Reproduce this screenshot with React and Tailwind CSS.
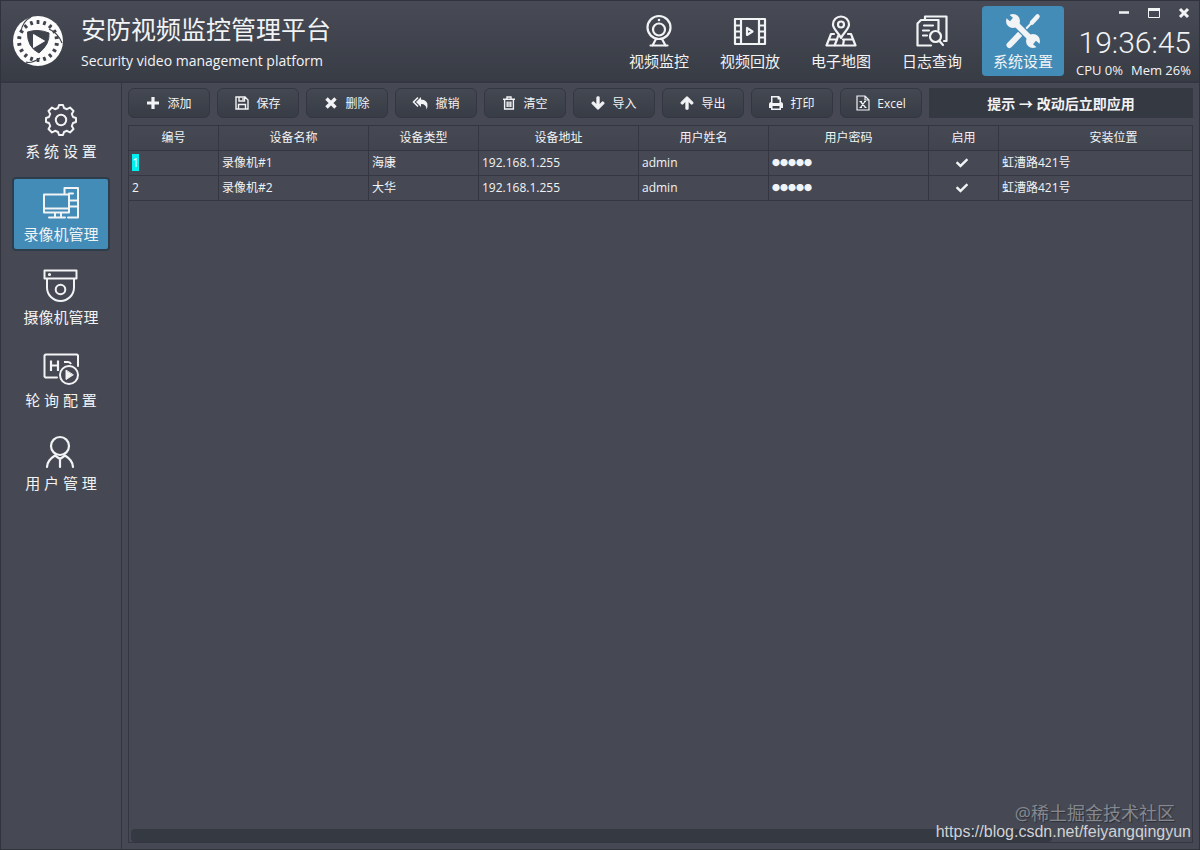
import React from 'react';
import { FaArrowDown, FaArrowUp, FaCheck } from 'react-icons/fa';

const line = { fill: 'none', stroke: 'currentColor', strokeLinecap: 'round', strokeLinejoin: 'round' };

function Logo() {
  const holes = Array.from({ length: 18 }, (_, i) => i * 20);
  return (
    <svg viewBox="0 0 50 50" className="w-[50px] h-[50px]" aria-hidden="true">
      <circle cx="25" cy="25" r="25" fill="#fcfcfd" />
      {holes.map((a) => (
        <rect key={a} x="23.600" y="4" width="2.800" height="4" rx="0.500" fill="#3f434c" transform={`rotate(${a} 25 25)`} />
      ))}
      <path d="M14.500 16Q25 12.500 36 17Q37 28 26 37Q14 31 14.500 16Z" fill="#3f434c" stroke="#3f434c" strokeLinejoin="round" />
      <path d="M8 15Q10 5 18 1M49 27Q45 17 36 13M13 46Q18 48 27 42" fill="none" stroke="#3f434c" strokeWidth="1.200" />
      <path d="M20.500 18.500L31.500 25L20.500 31.500Z" fill="#fcfcfd" stroke="#fcfcfd" strokeLinejoin="round" />
    </svg>
  );
}

function WebcamIcon() {
  return (
    <svg viewBox="0 0 34 34" className="w-[34px] h-[34px]" {...line} strokeWidth="2.200">
      <circle cx="17" cy="13.500" r="11.500" />
      <circle cx="17" cy="15.500" r="6" />
      <circle cx="17" cy="6" r="0.700" fill="currentColor" strokeWidth="1.200" />
      <path d="M14 25L10.500 31.500M20 25L23.500 31.500M8.500 31.500H25.500" />
    </svg>
  );
}

function FilmIcon() {
  return (
    <svg viewBox="0 0 34 34" className="w-[34px] h-[34px]" {...line} strokeWidth="2.200">
      <path d="M2 5H32V30H2ZM8 5V30M26 5V30M2 11.500H8M2 17.500H8M2 23.500H8M26 11.500H32M26 17.500H32M26 23.500H32" />
      <path d="M14 14V21L19.500 17.500Z" />
    </svg>
  );
}

function MapIcon() {
  return (
    <svg viewBox="0 0 34 34" className="w-[34px] h-[34px]" {...line} strokeWidth="2.200">
      <path d="M17 24C14 18 9 15 9 10.500A8 8 0 0 1 25 10.500C25 15 20 18 17 24Z" />
      <circle cx="17" cy="10.500" r="3" />
      <path d="M10 20H7L2.500 31.500H31.500L27 20H24M5.500 25.500H13L10.500 31.500M13 25.500L14 22M20 25.500L19 31.500M19 25.500H29" />
    </svg>
  );
}

function LogIcon() {
  return (
    <svg viewBox="0 0 34 34" className="w-[34px] h-[34px]" {...line} strokeWidth="2.200">
      <path d="M16 31.500H2.500V9.500L6 6H23.500V16M10 6V2.500H31.500V27H29" />
      <path d="M9 11.500H18M8 16.500H14M8 21.500H12" />
      <circle cx="20.500" cy="22.500" r="5.500" />
      <path d="M24.500 27L28 31" />
    </svg>
  );
}

function ToolsIcon() {
  return (
    <svg viewBox="0 0 36 36" className="w-9 h-9" fill="none" stroke="currentColor">
      <path d="M32.500 3.500L27 9.500" strokeWidth="4.500" strokeLinecap="round" />
      <path d="M27 9.500L19 18" strokeWidth="2" />
      <path d="M15 21L4.500 32" strokeWidth="6" strokeLinecap="round" />
      <path d="M9 9L27 27" strokeWidth="8" stroke="#438cb8" />
      <path d="M9 9L27 27" strokeWidth="5.500" />
      <circle cx="8" cy="8" r="7" fill="currentColor" stroke="none" />
      <circle cx="28" cy="28" r="7" fill="currentColor" stroke="none" />
      <path d="M0 1L6.500 6.500M36 35L29.500 29.500" strokeWidth="4.500" stroke="#438cb8" />
    </svg>
  );
}

function GearIcon() {
  return (
    <svg viewBox="0 0 36 36" className="w-9 h-9" {...line} strokeWidth="2">
      <path d="M15 6L16 3H20L21 6L24 7.200L27 5.500L30.500 9L28.800 12L30 15L33 16V20L30 21L28.800 24L30.500 27L27 30.500L24 28.800L21 30L20 33H16L15 30L12 28.800L9 30.500L5.500 27L7.200 24L6 21L3 20V16L6 15L7.200 12L5.500 9L9 5.500L12 7.200Z" />
      <circle cx="18" cy="18" r="5.200" />
    </svg>
  );
}

function RecorderIcon() {
  return (
    <svg viewBox="0 0 36 36" className="w-9 h-9" {...line} strokeWidth="2">
      <path d="M1 9.500H26V27.500H1ZM1 23.500H26M12 27.500V32M18 27.500V32M6 32.500H22" />
      <path d="M21.500 9V3H35V32.500H25M26 8.500H30M26 15.500H34M26 21.500H34" />
    </svg>
  );
}

function DomeIcon() {
  return (
    <svg viewBox="0 0 36 36" className="w-9 h-9" {...line} strokeWidth="2">
      <path d="M1.500 2.500H33.500V10.500H1.500ZM4 11V19.500A13.500 13.500 0 0 0 31 19.500V11" />
      <circle cx="17.500" cy="21.500" r="4.800" />
      <circle cx="6.500" cy="6.500" r="0.600" fill="currentColor" />
    </svg>
  );
}

function PollIcon() {
  return (
    <svg viewBox="0 0 36 36" className="w-9 h-9" {...line} strokeWidth="2">
      <path d="M14 26.500H2.500L1.500 25.500V4.500L2.500 3.500H34L35 4.500V15" />
      <path d="M8 9.500V20M15 9.500V20M8 14.500H15M21 11H25Q27 11 28 13" strokeLinecap="butt" strokeWidth="2.200" />
      <circle cx="26" cy="24" r="9" />
      <path d="M23 19.500V28.500L30 24Z" fill="currentColor" strokeWidth="1" />
    </svg>
  );
}

function UserIcon() {
  return (
    <svg viewBox="0 0 36 36" className="w-9 h-9" {...line} strokeWidth="2.200">
      <circle cx="17" cy="12" r="9" />
      <path d="M4 33C4 27 8 24 12 21.500M30 33C30 27 26 24 22 21.500M12 21.500L17 25L22 21.500M17 25V33" />
    </svg>
  );
}

function FloppyIcon() {
  return (
    <svg viewBox="0 0 14 14" className="w-3.5 h-3.5" fill="none" stroke="currentColor" strokeWidth="1.400">
      <path d="M1 1H10L13 4V13H1ZM4 1V5H9.500V1M3.500 13V8.500H10.500V13" />
      <path d="M8 2V4" />
    </svg>
  );
}

function TrashIcon() {
  return (
    <svg viewBox="0 0 14 14" className="w-3.5 h-3.5" fill="none" stroke="currentColor" strokeWidth="1.400">
      <path d="M1 3.300H13M5 3V1H9V3M2.600 3.500V13H11.400V3.500M5.200 5.500V11M7 5.500V11M8.800 5.500V11" />
    </svg>
  );
}

function CrossIcon() {
  return (
    <svg viewBox="0 0 14 14" className="w-3.5 h-3.5">
      <path d="M2.500 2.500L11.500 11.500M11.500 2.500L2.500 11.500" stroke="currentColor" strokeWidth="3.400" />
    </svg>
  );
}

function PlusIcon() {
  return (
    <svg viewBox="0 0 14 14" className="w-3.5 h-3.5">
      <path d="M7 1V13M1 7H13" stroke="currentColor" strokeWidth="3.200" />
    </svg>
  );
}

function UndoIcon() {
  return (
    <svg viewBox="0 0 16 14" className="w-4 h-3.5" fill="currentColor">
      <path d="M4 6L9 1V3.500Q16 4 15.500 10Q15.300 12 14.500 13.500Q14.500 8 9 8V11Z" />
      <path d="M6 1.500L1.500 6L6 10.500" fill="none" stroke="currentColor" strokeWidth="1.600" />
    </svg>
  );
}

function PrintIcon() {
  return (
    <svg viewBox="0 0 14 14" className="w-3.5 h-3.5" fill="currentColor">
      <path fillRule="evenodd" d="M2 0H10L12 2V6Q14 6.500 14 8V12H12V14H2V12H0V8Q0 6.500 2 6ZM3.500 1.500V7H10.500V3.500H8.500V1.500ZM3.500 10V12.500H10.500V10Z" />
    </svg>
  );
}

function ExcelIcon() {
  return (
    <svg viewBox="0 0 14 16" className="w-3.5 h-4" fill="none" stroke="currentColor" strokeWidth="1.200">
      <path d="M1 1H9L13 5V15H1ZM9 1V5H13" />
      <path d="M4.500 6.500L9.500 12.500M9 6.500L4.500 12.500M3.500 6.500H6M8 6.500H10M3.500 12.500H6M8.500 12.500H10.500" />
    </svg>
  );
}

const navItems = [
  { label: '视频监控', icon: <WebcamIcon /> },
  { label: '视频回放', icon: <FilmIcon /> },
  { label: '电子地图', icon: <MapIcon /> },
  { label: '日志查询', icon: <LogIcon /> },
  { label: '系统设置', icon: <ToolsIcon />, active: true },
];

const sideItems = [
  { label: '系 统 设 置', icon: <GearIcon /> },
  { label: '录像机管理', icon: <RecorderIcon />, active: true },
  { label: '摄像机管理', icon: <DomeIcon /> },
  { label: '轮 询 配 置', icon: <PollIcon /> },
  { label: '用 户 管 理', icon: <UserIcon /> },
];

const actions = [
  { label: '添加', icon: <PlusIcon /> },
  { label: '保存', icon: <FloppyIcon /> },
  { label: '删除', icon: <CrossIcon /> },
  { label: '撤销', icon: <UndoIcon /> },
  { label: '清空', icon: <TrashIcon /> },
  { label: '导入', icon: <FaArrowDown className="w-3.5 h-3.5 stroke-current stroke-[40]" /> },
  { label: '导出', icon: <FaArrowUp className="w-3.5 h-3.5 stroke-current stroke-[40]" /> },
  { label: '打印', icon: <PrintIcon /> },
  { label: 'Excel', icon: <ExcelIcon /> },
];

const columns = [
  { label: '编号', width: 'w-[90px]' },
  { label: '设备名称', width: 'w-[150px]' },
  { label: '设备类型', width: 'w-[110px]' },
  { label: '设备地址', width: 'w-[160px]' },
  { label: '用户姓名', width: 'w-[130px]' },
  { label: '用户密码', width: 'w-[160px]' },
  { label: '启用', width: 'w-[70px]' },
  { label: '安装位置', width: 'w-[230px]' },
];

const devices = [
  { id: 1, name: '录像机#1', type: '海康', ip: '192.168.1.255', user: 'admin', place: '虹漕路421号', editing: true },
  { id: 2, name: '录像机#2', type: '大华', ip: '192.168.1.255', user: 'admin', place: '虹漕路421号' },
];

function Header() {
  return (
    <header className="flex h-[82px] shrink-0 border-b-2 border-[#343741] bg-linear-to-b from-[#484b55] to-[#383c45]">
      <div className="flex flex-1 items-center pl-3 gap-[18px]">
        <Logo />
        <div className="pt-0.5">
          <h1 className="text-[25px] leading-9">安防视频监控管理平台</h1>
          <p className="mt-0.5 text-[14px] leading-6">Security video management platform</p>
        </div>
      </div>
      <nav className="flex gap-[9px] pt-[5px]">
        {navItems.map((item) => (
          <button
            key={item.label}
            className={`flex flex-col items-center w-[82px] h-[70px] rounded pt-1.5 ${item.active ? 'bg-[#438cb8]' : ''}`}
          >
            <span className="flex items-center justify-center h-[38px]">{item.icon}</span>
            <span className="text-[15px] leading-[22px]">{item.label}</span>
          </button>
        ))}
      </nav>
      <div className="flex flex-col w-[135px] pl-3 pr-2">
        <div className="flex justify-end gap-4 h-6 items-center">
          <button aria-label="最小化" className="w-3.5 h-3.5">
            <svg viewBox="0 0 14 14" className="w-3.5 h-3.5"><path d="M2 6.500H12" stroke="currentColor" strokeWidth="2.500" /></svg>
          </button>
          <button aria-label="最大化" className="w-3.5 h-3.5">
            <svg viewBox="0 0 14 14" className="w-3.5 h-3.5" fill="none" stroke="currentColor">
              <path d="M1.500 3V11.500H12.500V3" />
              <path d="M1 3.500H13" strokeWidth="3" />
            </svg>
          </button>
          <button aria-label="关闭" className="w-3.5 h-3.5">
            <svg viewBox="0 0 14 14" className="w-3.5 h-3.5"><path d="M3 3L11 11M11 3L3 11" stroke="currentColor" strokeWidth="3" /></svg>
          </button>
        </div>
        <time className="text-right text-[30px] leading-9 font-light whitespace-nowrap font-['Roboto']">19:36:45</time>
        <p className="flex justify-between text-[13px] leading-[18px] whitespace-nowrap">
          <span>CPU 0%</span>
          <span>Mem 26%</span>
        </p>
      </div>
    </header>
  );
}

function Sidebar() {
  return (
    <aside className="flex flex-col items-center w-[121px] shrink-0 gap-[9px] pt-[11px] border-r border-[#343741]">
      {sideItems.map((item) => (
        <button
          key={item.label}
          className={`flex flex-col items-center w-[98px] h-[74px] rounded border-2 pt-1.5 ${item.active ? 'bg-[#438cb8] border-[#2d3d4b]' : 'border-transparent'}`}
        >
          {item.icon}
          <span className="text-[15px] leading-[26px]">{item.label}</span>
        </button>
      ))}
    </aside>
  );
}

function Toolbar() {
  return (
    <div className="flex gap-[7px]">
      {actions.map((action) => (
        <button
          key={action.label}
          className="flex items-center justify-center gap-[7px] w-[82px] h-[30px] shrink-0 rounded-md border border-[#343741] bg-linear-to-b from-[#444852] to-[#383c45] text-[12px]"
        >
          {action.icon}
          <span className="pt-px">{action.label}</span>
        </button>
      ))}
      <div className="flex flex-1 items-center justify-center h-[30px] bg-[#353942] text-[14px] font-bold whitespace-nowrap">
        提示 → 改动后立即应用
      </div>
    </div>
  );
}

function DeviceTable() {
  return (
    <div className="flex flex-1 flex-col justify-between mt-[7px] border border-[#343741] overflow-hidden">
      <table className="table-fixed w-[1100px] border-separate border-spacing-0 text-[12px] leading-6">
        <thead>
          <tr className="bg-linear-to-b from-[#464953] to-[#40444d]">
            {columns.map((col) => (
              <th key={col.label} className={`p-0 font-normal border-r border-b border-[#343741] ${col.width}`}>
                {col.label}
              </th>
            ))}
          </tr>
        </thead>
        <tbody>
          {devices.map((d) => (
            <tr key={d.id} className="[&>td]:h-[25px] [&>td]:border-r [&>td]:border-b [&>td]:border-[#343741] [&>td]:px-[3px] [&>td]:py-0">
              <td>
                <span className={d.editing ? 'inline-block leading-[17px] bg-[#00f0f0]' : ''}>{d.id}</span>
              </td>
              <td>{d.name}</td>
              <td>{d.type}</td>
              <td>{d.ip}</td>
              <td>{d.user}</td>
              <td className="text-[8px]">●●●●●</td>
              <td>
                <label className="relative flex items-center justify-center h-6 pr-1">
                  <input type="checkbox" defaultChecked aria-label={`启用 ${d.name}`} className="peer appearance-none w-3.5 h-3.5" />
                  <FaCheck className="absolute w-3 h-3 hidden peer-checked:block" />
                </label>
              </td>
              <td>{d.place}</td>
            </tr>
          ))}
        </tbody>
      </table>
      <div className="h-[13px] mx-0.5">
        <div className="h-full w-[87%] rounded-sm bg-[#353942]" />
      </div>
    </div>
  );
}

export default function App() {
  return (
    <div className="relative flex flex-col min-h-screen border border-[#30333c] bg-[#464953] text-[#f2f3f5] font-['Open_Sans','Noto_Sans_CJK_SC',sans-serif]">
      <Header />
      <div className="flex flex-1">
        <Sidebar />
        <main className="flex flex-1 flex-col min-w-0 pt-[5px] pr-1.5 pb-1.5 pl-1.5">
          <Toolbar />
          <DeviceTable />
        </main>
      </div>
      <div className="absolute right-2 bottom-2 text-right pointer-events-none">
        <p className="pr-4 text-[18px] leading-5 text-[#858890] [text-shadow:1px_1px_1px_#2c2f37]">@稀土掘金技术社区</p>
        <p className="text-[16px] leading-[18px] text-[#d0d2d6] font-['Liberation_Sans']">https://blog.csdn.net/feiyangqingyun</p>
      </div>
    </div>
  );
}
